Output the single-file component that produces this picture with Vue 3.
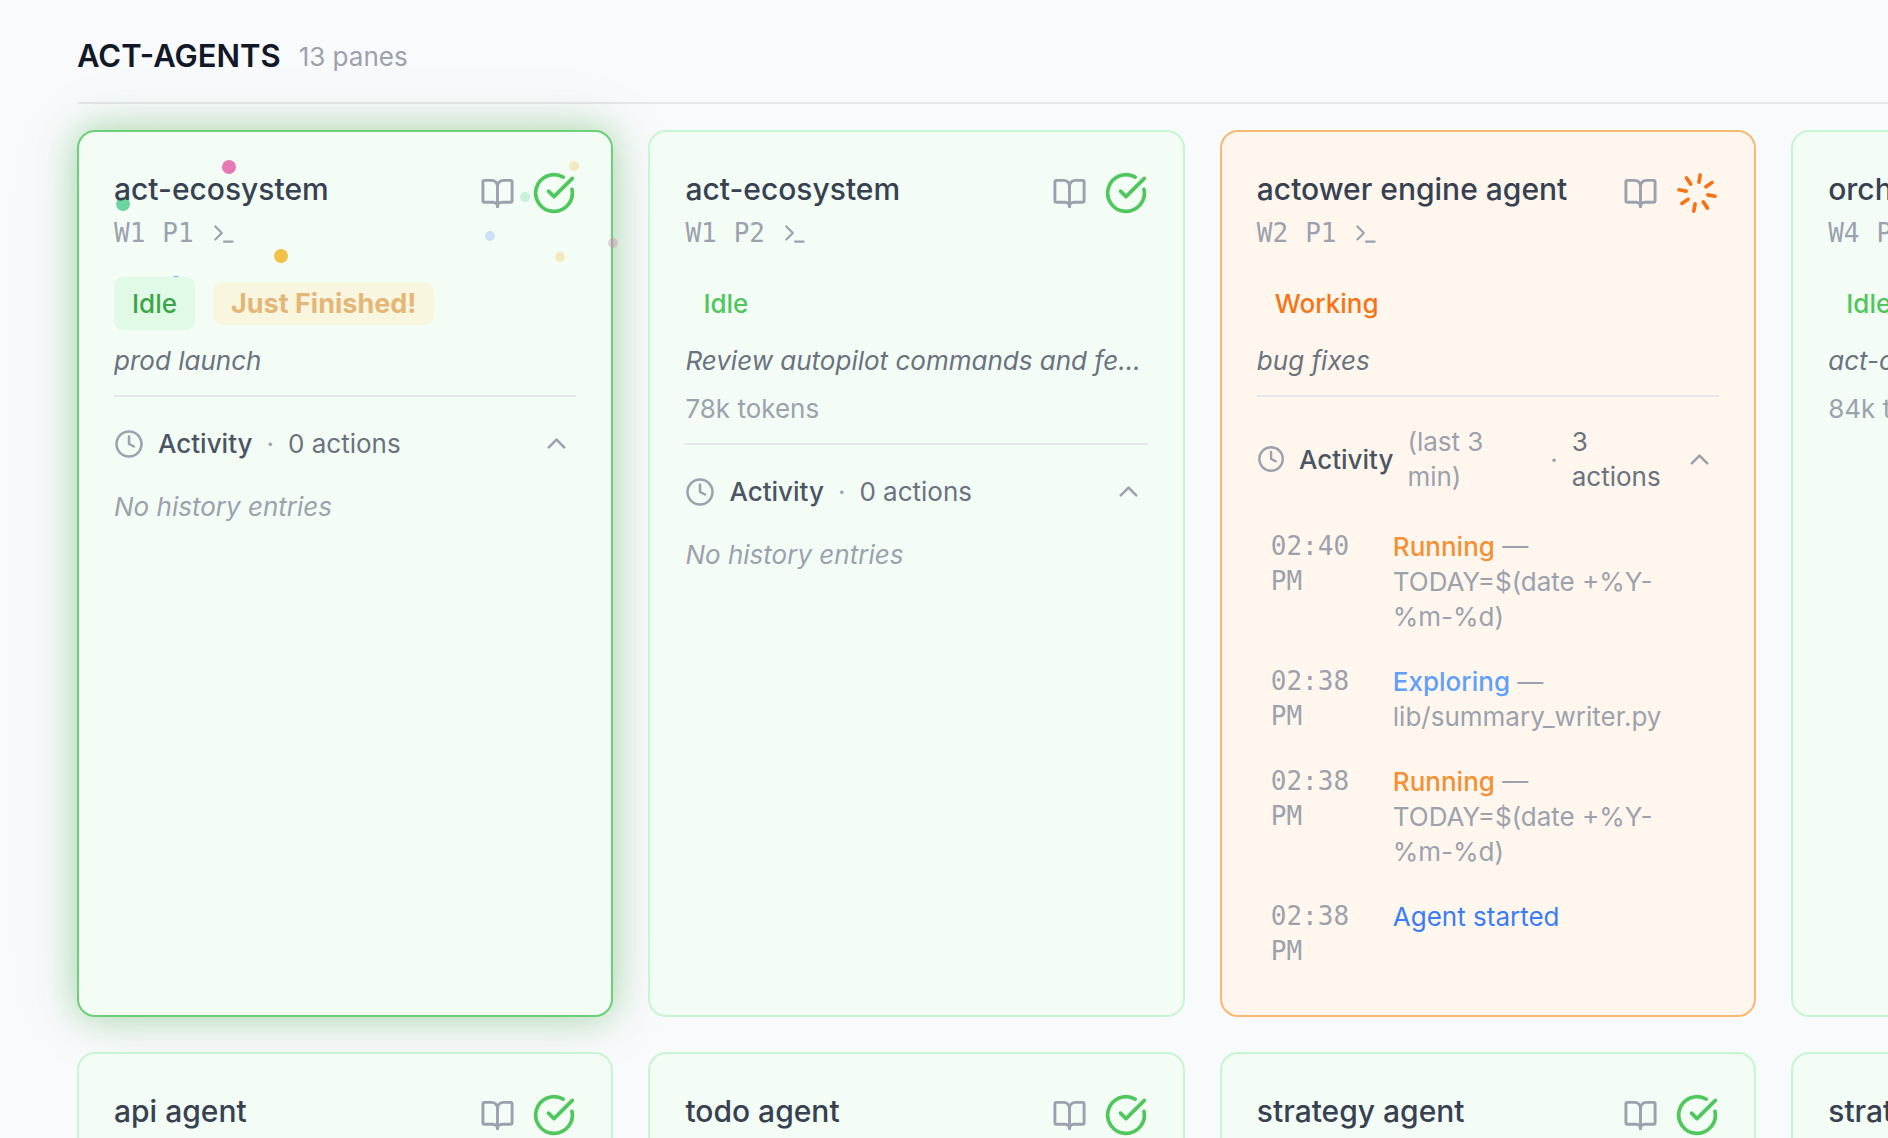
<script setup>
import { reactive } from 'vue';

const panes = reactive([
  {
    id: 1, name: 'act-ecosystem', win: 'W1', pane: 'P1', state: 'idle', label: 'Idle',
    finished: true, task: 'prod launch', activity: { open: true, count: '0 actions', entries: [] },
  },
  {
    id: 2, name: 'act-ecosystem', win: 'W1', pane: 'P2', state: 'idle', label: 'Idle',
    task: 'Review autopilot commands and features', tokens: '78k tokens',
    activity: { open: true, count: '0 actions', entries: [] },
  },
  {
    id: 3, name: 'actower engine agent', win: 'W2', pane: 'P1', state: 'working', label: 'Working',
    task: 'bug fixes',
    activity: {
      open: true, range: '(last 3 min)', count: '3 actions',
      entries: [
        { time: '02:40 PM', kind: 'running', title: 'Running', detail: 'TODAY=$(date +%Y-%m-%d)' },
        { time: '02:38 PM', kind: 'exploring', title: 'Exploring', detail: 'lib/summary_writer.py' },
        { time: '02:38 PM', kind: 'running', title: 'Running', detail: 'TODAY=$(date +%Y-%m-%d)' },
        { time: '02:38 PM', kind: 'started', title: 'Agent started' },
      ],
    },
  },
  { id: 4, name: 'orchestrator', win: 'W4', pane: 'P1', state: 'idle', label: 'Idle', task: 'act-core', tokens: '84k tokens' },
  { id: 5, name: 'api agent', win: 'W5', pane: 'P1', state: 'idle', label: 'Idle' },
  { id: 6, name: 'todo agent', win: 'W6', pane: 'P1', state: 'idle', label: 'Idle' },
  { id: 7, name: 'strategy agent', win: 'W7', pane: 'P1', state: 'idle', label: 'Idle' },
  { id: 8, name: 'strategy agent', win: 'W7', pane: 'P2', state: 'idle', label: 'Idle' },
]);

// confetti burst shown while a pane is freshly finished
const confetti = [
  { x: 152, y: 37, r: 7, color: '#e67ab4' },
  { x: 46, y: 74, r: 7, color: '#6dd3a0' },
  { x: 204, y: 126, r: 7, color: '#f3c04a' },
  { x: 99, y: 153, r: 7, color: '#6b9ff5' },
  { x: 497, y: 36, r: 5, color: '#f3e9c0' },
  { x: 448, y: 67, r: 5, color: '#c9f0dc' },
  { x: 413, y: 106, r: 5, color: '#cbe2f6' },
  { x: 536, y: 113, r: 5, color: 'rgba(214, 130, 180, 0.4)' },
  { x: 483, y: 127, r: 5, color: '#f3e9c0' },
];
</script>

<template>
  <main class="board">
    <header class="group-header">
      <h2>ACT-AGENTS</h2>
      <span class="pane-count">13 panes</span>
    </header>

    <div class="grid">
      <article v-for="p in panes" :key="p.id" class="card" :class="[p.state, { finished: p.finished }]">
        <svg v-if="p.finished" class="confetti" aria-hidden="true">
          <circle v-for="(c, i) in confetti" :key="i" :cx="c.x" :cy="c.y" :r="c.r" :fill="c.color" />
        </svg>

        <div class="card-head">
          <div class="card-names">
            <h3>{{ p.name }}</h3>
            <div class="location">
              <span>{{ p.win }}</span>
              <span>{{ p.pane }}</span>
              <button type="button" class="icon-btn" aria-label="Open terminal">
                <svg class="icon terminal" viewBox="0 0 24 24"><path d="m4 17 6-6-6-6M12 19h8" /></svg>
              </button>
            </div>
          </div>
          <div class="card-icons">
            <button type="button" class="icon-btn" aria-label="Open notes">
              <svg class="icon book" viewBox="0 0 24 24">
                <path d="M12 7v14" />
                <path d="M3 18a1 1 0 0 1-1-1V4a1 1 0 0 1 1-1h5a4 4 0 0 1 4 4 4 4 0 0 1 4-4h5a1 1 0 0 1 1 1v13a1 1 0 0 1-1 1h-6a3 3 0 0 0-3 3 3 3 0 0 0-3-3z" />
              </svg>
            </button>
            <svg v-if="p.state === 'working'" class="icon state-icon" viewBox="0 0 24 24">
              <g transform="rotate(10 12 12)">
                <path d="M12 2v4M16.2 7.8l2.9-2.9M18 12h4M16.2 16.2l2.9 2.9M12 18v4M4.9 19.1l2.9-2.9M2 12h4M4.9 4.9l2.9 2.9" />
              </g>
            </svg>
            <svg v-else class="icon state-icon" viewBox="0 0 24 24">
              <path d="M21.8 10A10 10 0 1 1 17 3.335" />
              <path d="m9 11 3 3L22 4" />
            </svg>
          </div>
        </div>

        <div class="badges">
          <span class="badge status">{{ p.label }}</span>
          <span v-if="p.finished" class="badge just-finished">Just Finished!</span>
        </div>

        <p v-if="p.task" class="task">{{ p.task }}</p>
        <p v-if="p.tokens" class="tokens">{{ p.tokens }}</p>

        <section v-if="p.activity" class="activity">
          <button type="button" class="activity-toggle" :aria-expanded="p.activity.open" @click="p.activity.open = !p.activity.open">
            <svg class="icon clock" viewBox="0 0 24 24">
              <circle cx="12" cy="12" r="10" />
              <path d="M12 6v6l4 2" />
            </svg>
            <span class="activity-title">Activity</span>
            <span v-if="p.activity.range" class="range">{{ p.activity.range }}</span>
            <span class="dot">·</span>
            <span class="count">{{ p.activity.count }}</span>
            <svg class="icon chevron" viewBox="0 0 24 24"><path d="m18 15-6-6-6 6" /></svg>
          </button>

          <template v-if="p.activity.open">
            <p v-if="!p.activity.entries.length" class="empty">No history entries</p>
            <ul v-else class="entries">
              <li v-for="(e, i) in p.activity.entries" :key="i">
                <time>{{ e.time }}</time>
                <div class="message">
                  <span :class="e.kind">{{ e.title }}</span><template v-if="e.detail"> — <span class="detail">{{ e.detail }}</span></template>
                </div>
              </li>
            </ul>
          </template>
        </section>
      </article>
    </div>
  </main>
</template>

<style>
body {
  background: #f9fafc;
  overflow: hidden;
}
</style>

<style scoped>
.board {
  padding: 34px 0 35px 77px;
  font-family: Inter, "Liberation Sans", sans-serif;
  font-size: 26px;
  line-height: 35px;
  color: #9ca1ae;
}
h2, h3, p, ul { margin: 0; padding: 0; }
.group-header {
  display: flex;
  align-items: center;
  gap: 18px;
  padding-bottom: 24px;
  border-bottom: 2px solid #e5e7eb;
  margin-bottom: 26px;
}
h2 {
  font-size: 31px;
  line-height: 44px;
  font-weight: 600;
  color: #111827;
}
.grid {
  display: grid;
  grid-template-columns: repeat(4, 29.62%);
  gap: 35px;
}
.card {
  position: relative;
  min-width: 0;
  padding: 35px;
  border: 2px solid #c6f6d1;
  border-radius: 18px;
  background: #f3fdf6;
}
.card.working {
  background: #fff7ed;
  border-color: #f8b974;
}
.card.finished {
  border-color: #6ccf7a;
  box-shadow: 0 0 36px rgba(70, 185, 80, 0.45), 0 0 72px rgba(110, 140, 90, 0.1);
}
.card > * { position: relative; }
.card > .confetti {
  position: absolute;
  inset: -2px;
  width: 100%;
  height: 100%;
  overflow: visible;
}
.icon {
  display: block;
  fill: none;
  stroke: currentColor;
  stroke-width: 2;
  stroke-linecap: round;
  stroke-linejoin: round;
}
.icon-btn {
  padding: 0;
  border: 0;
  background: none;
  color: #9ca1ae;
  cursor: pointer;
}
.card-head {
  display: flex;
  justify-content: space-between;
  gap: 17px;
}
.card-names { min-width: 0; }
h3 {
  font-size: 30px;
  line-height: 44px;
  font-weight: 500;
  color: #374151;
  white-space: nowrap;
}
.location {
  display: flex;
  align-items: center;
  gap: 17px;
  margin-top: 5px;
  font-family: "DejaVu Sans Mono", monospace;
}
.terminal { width: 26px; height: 26px; }
.card-icons {
  display: flex;
  align-items: center;
  gap: 17px;
  height: 44px;
  padding-top: 4px;
}
.book { width: 35px; height: 35px; }
.state-icon { width: 44px; height: 44px; color: #4fc75c; }
.working .state-icon { color: #f97316; }
.badges {
  display: flex;
  align-items: center;
  gap: 18px;
  margin-top: 26px;
}
.badge {
  padding: 9px 18px;
  border-radius: 9px;
  font-weight: 500;
}
.status { color: #4fc75c; }
.working .status { color: #f97316; }
.finished .status { color: #3da548; background: #e1f9e7; }
.just-finished {
  padding: 4px 18px;
  font-size: 27px;
  font-weight: 700;
  color: #e4b678;
  background: #f9f6df;
}
.task {
  margin-top: 13px;
  font-style: italic;
  color: #6b7280;
  white-space: nowrap;
  overflow: hidden;
  text-overflow: ellipsis;
}
.tokens { margin-top: 13px; }
.activity {
  margin-top: 17px;
  padding-top: 27px;
  border-top: 2px solid #e5e7eb;
}
.activity-toggle {
  display: flex;
  align-items: center;
  gap: 14px;
  width: 100%;
  min-height: 39px;
  padding: 0 4px 0 0;
  border: 0;
  background: none;
  font: inherit;
  color: #9ca1ae;
  text-align: left;
  cursor: pointer;
}
.clock { width: 30px; height: 30px; }
.activity-title { font-weight: 500; color: #4b5563; }
.count { flex-shrink: 2; color: #6b7280; }
.chevron { flex: none; width: 31px; height: 31px; margin-left: auto; }
.empty { margin-top: 26px; font-style: italic; }
.entries {
  display: flex;
  flex-direction: column;
  gap: 30px;
  margin-top: 35px;
  padding: 0 14px 11px;
  list-style: none;
}
.entries li { display: flex; gap: 35px; }
time {
  flex: none;
  width: 87px;
  font-family: "DejaVu Sans Mono", monospace;
}
.message { min-width: 0; overflow-wrap: break-word; }
.running { font-weight: 500; color: #f59035; }
.exploring { font-weight: 500; color: #60a0fa; }
.started { color: #3b7cf8; }
</style>
